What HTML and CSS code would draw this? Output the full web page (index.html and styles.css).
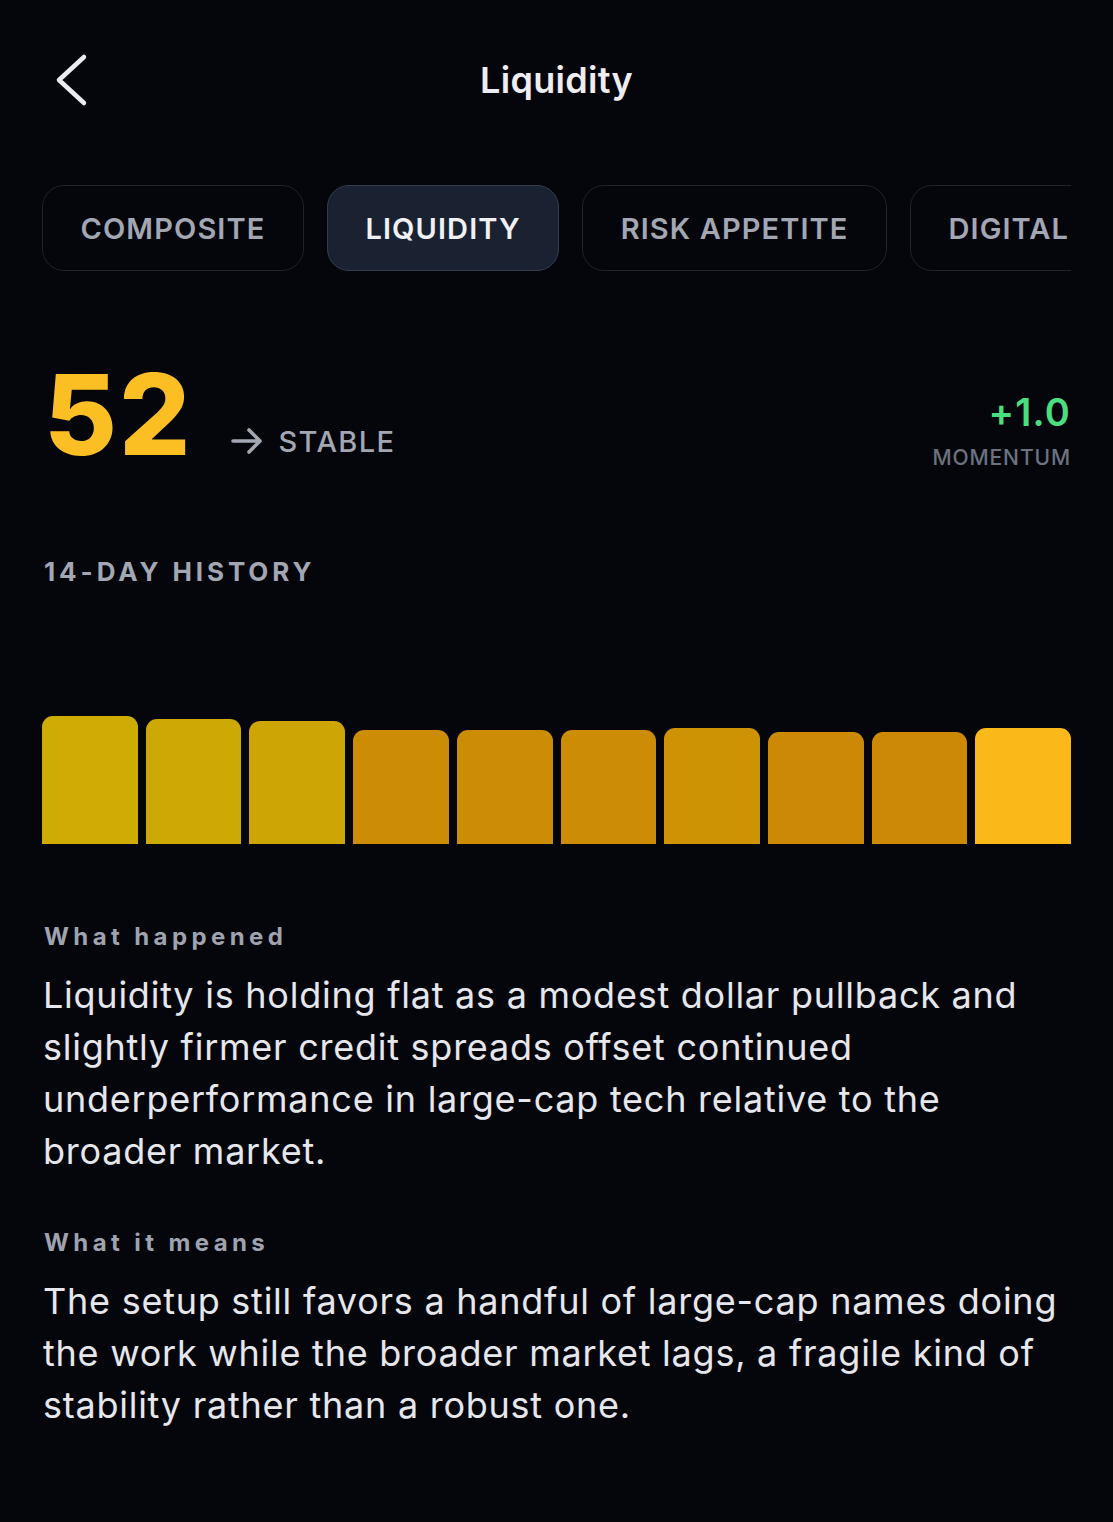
FILE: index.html
```html
<!DOCTYPE html>
<html lang="en">
<head>
<meta charset="utf-8">
<title>Liquidity</title>
<link rel="stylesheet" href="styles.css">
</head>
<body>
<div class="screen">
  <header class="header">
    <button class="back" aria-label="Back">
      <svg class="back-icon" width="48" height="56" viewBox="0 0 48 56" fill="none">
        <path d="M42 5 L17 28 L42 51" stroke="#ECEBF0" stroke-width="4.5" stroke-linecap="round" stroke-linejoin="round"/>
      </svg>
    </button>
    <h1 class="title">Liquidity</h1>
    <span class="header-spacer"></span>
  </header>

  <nav class="tabs">
    <span class="tab">COMPOSITE</span>
    <span class="tab tab-active">LIQUIDITY</span>
    <span class="tab">RISK APPETITE</span>
    <span class="tab">DIGITAL</span>
  </nav>

  <section class="score-row">
    <div class="score-main">
      <span class="score">52</span>
      <span class="trend">
        <svg class="trend-icon" width="32" height="28" viewBox="0 0 32 28" fill="none">
          <path d="M2 14 H29 M18 3 L29 14 L18 25" stroke="#A3A7B3" stroke-width="3.6" stroke-linecap="round" stroke-linejoin="round"/>
        </svg>
        <span class="trend-label">STABLE</span>
      </span>
    </div>
    <div class="momentum">
      <span class="momentum-value">+1.0</span>
      <span class="momentum-label">MOMENTUM</span>
    </div>
  </section>

  <h2 class="section-label">14-DAY HISTORY</h2>

  <div class="chart">
    <div class="bar" style="height:128px;background:#CEAC05"></div>
    <div class="bar" style="height:125px;background:#CDA905"></div>
    <div class="bar" style="height:123px;background:#CDA505"></div>
    <div class="bar" style="height:114px;background:#CC8C05"></div>
    <div class="bar" style="height:114px;background:#CC8C05"></div>
    <div class="bar" style="height:114px;background:#CC8C05"></div>
    <div class="bar" style="height:116px;background:#CE9305"></div>
    <div class="bar" style="height:112px;background:#CC8905"></div>
    <div class="bar" style="height:112px;background:#CC8905"></div>
    <div class="bar" style="height:116px;background:#FAB918"></div>
  </div>

  <section class="note">
    <h3 class="note-title">What happened</h3>
    <p class="note-body">Liquidity is holding flat as a modest dollar pullback and slightly firmer credit spreads offset continued underperformance in large-cap tech relative to the broader market.</p>
  </section>

  <section class="note note-second">
    <h3 class="note-title">What it means</h3>
    <p class="note-body">The setup still favors a handful of large-cap names doing the work while the broader market lags, a fragile kind of stability rather than a robust one.</p>
  </section>
</div>
</body>
</html>
```

FILE: styles.css
```css
* {
  box-sizing: border-box;
}

html, body {
  margin: 0;
  padding: 0;
  background: #05060B;
}

body {
  font-family: Inter, "Noto Sans", "Liberation Sans", sans-serif;
  color: #E6E7EC;
}

.screen {
  width: 1113px;
  min-height: 1522px;
  padding: 0 42px;
}

.header {
  height: 160px;
  display: grid;
  grid-template-columns: 1fr auto 1fr;
  align-items: center;
}

.back {
  background: none;
  border: none;
  padding: 0;
  width: 48px;
  height: 56px;
  display: flex;
}

.title {
  margin: 0;
  font-size: 36px;
  font-weight: 600;
  line-height: 1;
  color: #EEEDF2;
  letter-spacing: 0.3px;
}

.tabs {
  margin-top: 25px;
  display: flex;
  gap: 23px;
  overflow: hidden;
  height: 86px;
}

.tab {
  flex: none;
  height: 86px;
  padding: 0 37.5px;
  border: 1.5px solid #1E222C;
  border-radius: 22px;
  display: flex;
  align-items: center;
  font-size: 29px;
  font-weight: 600;
  letter-spacing: 1.1px;
  color: #A3A7B3;
}

.tab-active {
  background: #1A2232;
  border-color: #343E50;
  color: #F1F1F5;
}

.score-row {
  margin-top: 87px;
  display: flex;
  justify-content: space-between;
  align-items: flex-start;
}

.score-main {
  display: flex;
  align-items: baseline;
}

.score {
  font-size: 112px;
  font-weight: 800;
  line-height: 1;
  letter-spacing: 2px;
  color: #FBBF24;
  margin-left: 2px;
}

.trend {
  margin-left: 39px;
  display: flex;
  align-items: baseline;
  gap: 15px;
  position: relative;
  top: -3px;
}

.trend-icon {
  align-self: center;
  position: relative;
  top: -1px;
}

.trend-label {
  font-size: 29px;
  font-weight: 500;
  letter-spacing: 1.4px;
  color: #A3A7B3;
}

.momentum {
  padding-top: 35px;
  display: flex;
  flex-direction: column;
  align-items: flex-end;
}

.momentum-value {
  font-size: 38px;
  font-weight: 600;
  line-height: 1;
  letter-spacing: 1.2px;
  color: #4ADE80;
}

.momentum-label {
  margin-top: 16px;
  font-size: 21px;
  font-weight: 500;
  line-height: 1;
  letter-spacing: 0.9px;
  color: #6B7280;
}

.section-label {
  margin: 89px 0 0 2px;
  font-size: 26px;
  font-weight: 700;
  line-height: 1;
  letter-spacing: 3.9px;
  color: #A3A7B3;
}

.chart {
  margin-top: 109px;
  height: 150px;
  display: flex;
  align-items: flex-end;
  gap: 8px;
}

.bar {
  flex: 1;
  border-radius: 11px 11px 0 0;
}

.note {
  margin-top: 81px;
}

.note-second {
  margin-top: 54px;
}

.note-title {
  margin: 0 0 0 2px;
  font-size: 24px;
  font-weight: 700;
  line-height: 1;
  letter-spacing: 4.4px;
  color: #9EA3AF;
}

.note-body {
  margin: 20px 0 0 1px;
  font-size: 36px;
  font-weight: 400;
  line-height: 52px;
  letter-spacing: 0.75px;
  color: #E6E7EC;
}
```
